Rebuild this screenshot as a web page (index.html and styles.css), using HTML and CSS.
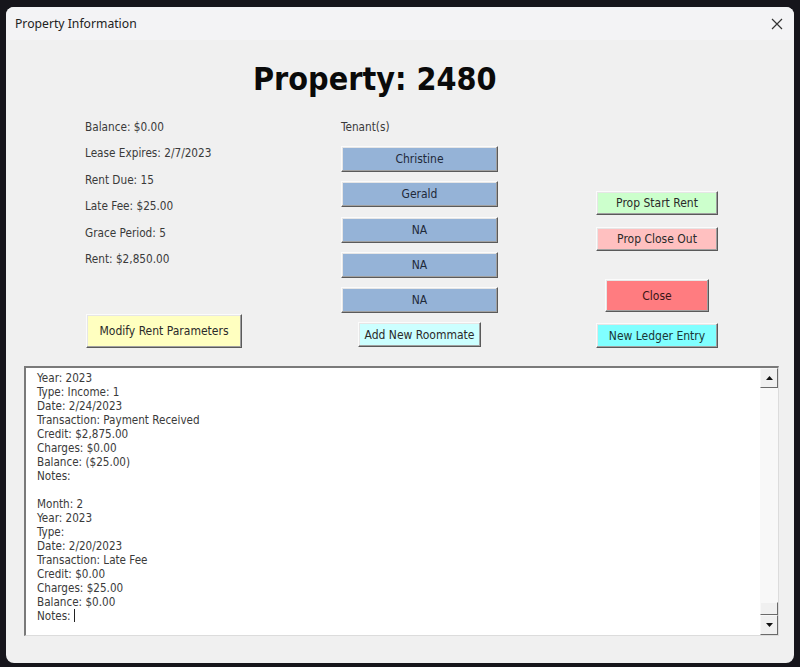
FILE: index.html
```html
<!DOCTYPE html>
<html>
<head>
<meta charset="utf-8">
<title>Property Information</title>
<link rel="stylesheet" href="styles.css">
</head>
<body>
<div class="window">
  <div class="titlebar">
    <span class="title">Property Information</span>
    <svg class="close" width="12" height="12" viewBox="0 0 12 12"><path d="M1 1 L11 11 M11 1 L1 11" stroke="#333" stroke-width="1.2" fill="none"/></svg>
  </div>
  <div class="form">
    <h1 class="heading">Property: 2480</h1>
    <div class="columns">
      <div class="col col-info">
        <ul class="facts">
          <li>Balance: $0.00</li>
          <li>Lease Expires: 2/7/2023</li>
          <li>Rent Due: 15</li>
          <li>Late Fee: $25.00</li>
          <li>Grace Period: 5</li>
          <li>Rent: $2,850.00</li>
        </ul>
        <button class="btn btn-modify">Modify Rent Parameters</button>
      </div>
      <div class="col col-tenants">
        <div class="tenants-label">Tenant(s)</div>
        <button class="btn btn-tenant">Christine</button>
        <button class="btn btn-tenant">Gerald</button>
        <button class="btn btn-tenant">NA</button>
        <button class="btn btn-tenant">NA</button>
        <button class="btn btn-tenant">NA</button>
        <button class="btn btn-roommate">Add New Roommate</button>
      </div>
      <div class="col col-actions">
        <button class="btn btn-start">Prop Start Rent</button>
        <button class="btn btn-closeout">Prop Close Out</button>
        <button class="btn btn-close">Close</button>
        <button class="btn btn-ledger">New Ledger Entry</button>
      </div>
    </div>
    <div class="ledger">
      <div class="ledger-text">Year: 2023
Type: Income: 1
Date: 2/24/2023
Transaction: Payment Received
Credit: $2,875.00
Charges: $0.00
Balance: ($25.00)
Notes:

Month: 2
Year: 2023
Type:
Date: 2/20/2023
Transaction: Late Fee
Credit: $0.00
Charges: $25.00
Balance: $0.00
Notes: <span class="caret"></span></div>
      <div class="scrollbar">
        <div class="sb-btn sb-up"><svg width="7" height="4" viewBox="0 0 7 4"><path d="M0 4 L3.5 0 L7 4 Z" fill="#111"/></svg></div>
        <div class="sb-track"></div>
        <div class="sb-thumb"></div>
        <div class="sb-btn sb-down"><svg width="7" height="4" viewBox="0 0 7 4"><path d="M0 0 L3.5 4 L7 0 Z" fill="#111"/></svg></div>
      </div>
    </div>
  </div>
</div>
</body>
</html>
```

FILE: styles.css
```css
html, body {
  margin: 0;
  padding: 0;
}
body {
  width: 800px;
  height: 667px;
  background: #16151b;
  overflow: hidden;
  font-family: "DejaVu Sans Condensed", "DejaVu Sans", sans-serif;
}
.window {
  margin: 7px 0 0 6px;
  width: 788px;
  height: 656px;
  background: #f0f0f0;
  border-radius: 8px;
  overflow: hidden;
}
.titlebar {
  height: 33px;
  background: #f3f3f5;
  display: flex;
  align-items: center;
  justify-content: space-between;
  padding: 0 11px 0 9px;
}
.title {
  font-family: "Noto Sans", "Open Sans", sans-serif;
  font-size: 12.2px;
  color: #222;
  padding-bottom: 1px;
}
.close {
  display: block;
}
.form {
  display: flex;
  flex-direction: column;
}
.heading {
  margin: 19px 0 0 247px;
  font-family: "DejaVu Sans Condensed", "DejaVu Sans", sans-serif;
  font-weight: bold;
  font-size: 32px;
  line-height: 40px;
  color: #0a0a0a;
}
.columns {
  display: grid;
  grid-template-columns: 256px 255px 130px;
  padding-left: 79px;
  margin-top: 15px;
}
.col {
  display: flex;
  flex-direction: column;
  align-items: flex-start;
}
.facts {
  list-style: none;
  margin: 0;
  padding: 0;
  font-size: 11.7px;
  line-height: 26.4px;
  color: #3a3a3a;
}
.btn {
  font-family: "DejaVu Sans Condensed", "DejaVu Sans", sans-serif;
  font-size: 12px;
  color: #2a2a2a;
  padding: 0;
  border: 1px solid;
  border-color: #fbfbfb #5a5a5a #5a5a5a #fbfbfb;
  box-shadow: inset -1px -1px 0 #a0a0a0, inset 1px 1px 0 #e6e6e6;
  border-radius: 0;
}
.btn-modify {
  margin-top: 42px;
  margin-left: 1px;
  width: 156px;
  height: 34px;
  background: #ffffc0;
}
.tenants-label {
  font-size: 11.7px;
  line-height: 26px;
  color: #3a3a3a;
}
.btn-tenant {
  width: 157px;
  height: 26px;
  margin-top: 9.25px;
  background: #95b3d7;
  color: #1f2a3a;
}
.tenants-label + .btn-tenant {
  margin-top: 6px;
}
.btn-roommate {
  width: 123px;
  height: 25px;
  margin: 9px 0 0 17px;
  background: #ccffff;
}
.btn-start {
  margin-top: 77px;
  width: 122px;
  height: 24px;
  background: #ccffcc;
}
.btn-closeout {
  margin-top: 12px;
  width: 122px;
  height: 24px;
  background: #ffc0c0;
}
.btn-close {
  margin: 28px 0 0 9px;
  width: 104px;
  height: 33px;
  background: #ff7c80;
  color: #3a1515;
}
.btn-ledger {
  margin-top: 11px;
  width: 122px;
  height: 25px;
  background: #80ffff;
  color: #1a3535;
}
.ledger {
  margin: 18px 0 0 18px;
  width: 755px;
  height: 270px;
  box-sizing: border-box;
  background: #fff;
  border-top: 2px solid #7a7a7a;
  border-left: 2px solid #7a7a7a;
  border-right: 1px solid #dcdcdc;
  border-bottom: 1px solid #dcdcdc;
  display: flex;
}
.ledger-text {
  flex: 1;
  white-space: pre;
  font-size: 11.6px;
  line-height: 14px;
  color: #3a3a3a;
  padding: 3px 0 0 11px;
}
.caret {
  display: inline-block;
  width: 1px;
  height: 13px;
  background: #222;
  vertical-align: -2px;
}
.scrollbar {
  width: 18px;
  display: flex;
  flex-direction: column;
  background: #f8f8f8;
}
.sb-btn {
  height: 18px;
  background: #f0f0f0;
  border: 1px solid;
  border-color: #f8f8f8 #6a6a6a #6a6a6a #f8f8f8;
  display: flex;
  align-items: center;
  justify-content: center;
}
.sb-track {
  flex: 1;
}
.sb-thumb {
  height: 11px;
  background: #f0f0f0;
  border: 1px solid;
  border-color: #f8f8f8 #6a6a6a #6a6a6a #f8f8f8;
}
```
